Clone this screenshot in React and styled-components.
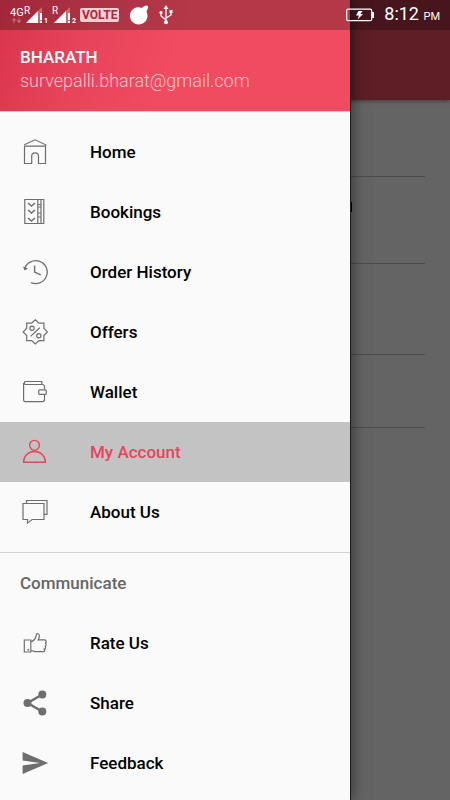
import React from 'react';
import styled, { createGlobalStyle } from 'styled-components';

const GlobalStyle = createGlobalStyle`
  * {
    box-sizing: border-box;
  }
  body {
    margin: 0;
    font-family: Roboto, 'Liberation Sans', sans-serif;
  }
`;

const Screen = styled.div`
  position: relative;
  min-height: 100vh;
  background: #646464;
`;

const StatusBar = styled.header`
  position: absolute;
  top: 0;
  left: 0;
  right: 0;
  z-index: 3;
  display: flex;
  align-items: center;
  justify-content: space-between;
  height: 30px;
  padding: 0 10px;
  color: #fff;
  background: rgba(0, 0, 0, 0.25);
`;

const StatusGroup = styled.div`
  display: flex;
  align-items: center;
  gap: ${(props) => props.$gap}px;
`;

const Volte = styled.span`
  padding: 0 2px;
  border-radius: 2px;
  background: #f5cdd3;
  color: #a52a3d;
  font-size: 12px;
  font-weight: 700;
  line-height: 14px;
`;

const Clock = styled.time`
  font-size: 18px;
  line-height: 32px;
  small {
    font-size: 11px;
  }
`;

const AppBar = styled.div`
  height: 100px;
  background: #5e1e26;
  box-shadow: 0 1px 4px rgba(0, 0, 0, 0.4);
`;

const Fields = styled.div`
  padding: 0 25px;
`;

const Field = styled.div`
  display: flex;
  justify-content: flex-end;
  height: ${(props) => props.$height}px;
  padding: 25px 73px 0 0;
  border-bottom: 1px solid #4c4c4c;
`;

const Caret = styled.span`
  width: 2px;
  height: 10px;
  background: #000;
`;

const Drawer = styled.aside`
  position: absolute;
  top: 0;
  bottom: 0;
  left: 0;
  z-index: 2;
  width: calc(100% - 100px);
  max-width: 400px;
  background: #fafafa;
  box-shadow: 1px 0 0 #1c1c1c, 2px 0 14px rgba(0, 0, 0, 0.5);
`;

const DrawerHeader = styled.div`
  height: 112px;
  padding: 46px 20px 0;
  border-bottom: 1px solid #e3c5c9;
  background: linear-gradient(110deg, #d8344b 0%, #e7435a 25%, #f04b60 50%);
  color: #fff;
`;

const UserName = styled.div`
  font-size: 17px;
  font-weight: 500;
  line-height: 22px;
`;

const UserEmail = styled.div`
  color: #fbc6cd;
  font-size: 18px;
  font-weight: 300;
  line-height: 26px;
`;

const Menu = styled.ul`
  margin: 0;
  padding: ${(props) => (props.$first ? '10px 0' : '0')};
  list-style: none;
`;

const MenuLink = styled.a`
  display: flex;
  align-items: center;
  gap: 40px;
  height: 60px;
  padding: 0 20px;
  background: ${(props) => (props.$active ? '#c3c3c3' : 'transparent')};
  color: ${(props) => (props.$active ? '#e5465c' : '#000')};
  font-size: 17px;
  font-weight: 500;
  text-decoration: none;
  svg {
    color: ${(props) => (props.$active ? '#e5465c' : '#6e6e6e')};
  }
`;

const SectionTitle = styled.h2`
  margin: 0;
  padding: 0 20px;
  border-top: 1px solid #d2d2d2;
  color: #666;
  font-size: 17px;
  font-weight: 500;
  line-height: 60px;
`;

const Icon = ({ children, solid }) => (
  <svg
    width='30'
    height='30'
    viewBox='0 0 30 30'
    fill={solid ? 'currentColor' : 'none'}
    stroke={solid ? 'none' : 'currentColor'}
    strokeWidth='1.2'
    aria-hidden='true'
  >
    {children}
  </svg>
);

const HomeIcon = () => (
  <Icon>
    <path d='M4.5 9.2V26.5h7.2v-7.2a3.4 3.4 0 0 1 6.8 0v7.2h7V9.2M4 9.2h22M4.3 7.8 15 2.8l10.7 5v1.4' />
  </Icon>
);

const BookingsIcon = () => (
  <Icon>
    <path d='M4.8 2.5h19v24h-19zM17.8 2.5v24M21 2.5v24' />
    <path d='m8 6 3.5 3L15 6M8 13l3.5 3 3.5-3M8 21l3.5 3 3.5-3' strokeWidth='1.5' />
    <path d='M18 7.5h3M18 10h3M18 16h3M18 20h3' />
  </Icon>
);

const HistoryIcon = () => (
  <Icon>
    <path d='M4.5 12.5A11.5 11.5 0 1 1 11 25.6' strokeWidth='1.3' />
    <path d='m3 9.5 1.5 4 3.5-2z' fill='currentColor' stroke='none' />
    <path d='M14.6 8.5v6.6l6.2 2.8' strokeWidth='1.4' />
  </Icon>
);

const OffersIcon = () => (
  <Icon>
    <path d='m15.3 2.8 3.6 3.4h5v5l3.5 3.7-3.5 3.7v5h-5l-3.6 3.4-3.6-3.4h-5v-5l-3.5-3.7 3.5-3.7v-5h5z' />
    <circle cx='12' cy='11.3' r='2.1' />
    <circle cx='18.8' cy='18.8' r='2.1' />
    <path d='m19.8 10.8-9.2 8.6' />
  </Icon>
);

const WalletIcon = () => (
  <Icon>
    <path d='M24.5 12V9.5a2 2 0 0 0-2-2H5.2a1.7 1.7 0 0 1 0-3h16.6v3M3.6 6v17a1.6 1.6 0 0 0 1.6 1.6h17.3a2 2 0 0 0 2-2V18' />
    <rect x='18.7' y='12.8' width='7.6' height='4.6' rx='1' />
  </Icon>
);

const AccountIcon = () => (
  <Icon>
    <circle cx='14.5' cy='8.3' r='4.9' strokeWidth='1.4' />
    <path d='M3.6 25.2c0-6.4 4.6-10.7 10.9-10.7s10.9 4.3 10.9 10.7z' strokeWidth='1.4' />
  </Icon>
);

const AboutIcon = () => (
  <Icon>
    <path d='M3 6.5h21v16H12l-4.5 3.6v-3.6H3zM6.5 6.5v-3H27v13.8h-3' />
  </Icon>
);

const RateIcon = () => (
  <Icon>
    <path d='M4.3 12h6.5v12H4.3zM10.8 14c3-1 5-3 5.6-7.3.2-1.7 3.2-1.3 3 1.2-.1 1.6-.6 2.8-1.2 4h6.3c2.3 0 2.3 3 .6 3.3 1.6.5 1.3 2.9-.3 3.1 1.3.5 1 2.6-.5 2.9 1 .7.5 2.5-1 2.5H16c-2.2 0-2.8-1.2-5.2-1.2' />
    <circle cx='8.3' cy='21.7' r='.4' />
  </Icon>
);

const ShareIcon = () => (
  <Icon solid>
    <circle cx='7.5' cy='15' r='4' />
    <circle cx='22.3' cy='6.5' r='4' />
    <circle cx='22.3' cy='23.5' r='4' />
    <path d='M22.3 6.5 7.5 15l14.8 8.5' fill='none' stroke='currentColor' strokeWidth='2.4' />
  </Icon>
);

const SendIcon = () => (
  <Icon solid>
    <path d='M2.6 4 28.2 15 2.6 26v-8.4L20 15 2.6 12.4z' />
  </Icon>
);

const SignalIcon = ({ network, sim }) => (
  <svg width={network ? 40 : 26} height='24' viewBox={network ? '0 0 40 24' : '14 0 26 24'} fill='#fff' aria-hidden='true'>
    {network && (
      <>
        <text x='0' y='13' fontSize='11'>
          {network}
        </text>
        <path d='M4 15l2.5 2.5h-2V20h-1v-2.5h-2zM9 20l-2.5-2.5h2V15h1v2.5h2z' opacity='.35' />
      </>
    )}
    <text x='14' y='11' fontSize='10'>
      R
    </text>
    <path d='M16 20 32 4v16z' opacity='.3' />
    <path d='M16 20 28 8v12z' />
    <path d='M30 10h2v7h-2zM30 18h2v2h-2z' />
    <text x='34' y='20' fontSize='7' fontWeight='700'>
      {sim}
    </text>
  </svg>
);

const CleanerIcon = () => (
  <svg width='20' height='20' viewBox='0 0 20 20' fill='#fff' aria-hidden='true'>
    <path d='M13 3c1.500-2.200 5.300-3.500 6-1.500.5 1.700-.9 3.500-1.500 5.200A8.800 8.800 0 1 1 2.600 5.600 9 9 0 0 1 13 3z' />
  </svg>
);

const UsbIcon = () => (
  <svg width='14' height='20' viewBox='0 0 14 20' fill='#fff' aria-hidden='true'>
    <path d='M7 3v14M2 8v3l5 4M12 7v3l-5 3' fill='none' stroke='#fff' strokeWidth='1.3' />
    <path d='m7 0 2.5 4h-5zM10.5 5h3v3h-3z' />
    <circle cx='2' cy='7.5' r='1.6' />
    <circle cx='7' cy='17.3' r='2' />
  </svg>
);

const BatteryIcon = () => (
  <svg width='28' height='14' viewBox='0 0 28 14' aria-hidden='true'>
    <rect x='.7' y='1.2' width='25' height='11.5' rx='1.5' fill='none' stroke='#fff' strokeWidth='1.2' />
    <path d='M26 4h2v6h-2zM12.500 3h4l-2 3h2.500l-5.500 5.500 1.500-4H10z' fill='#fff' />
  </svg>
);

const mainItems = [
  { label: 'Home', icon: HomeIcon },
  { label: 'Bookings', icon: BookingsIcon },
  { label: 'Order History', icon: HistoryIcon },
  { label: 'Offers', icon: OffersIcon },
  { label: 'Wallet', icon: WalletIcon },
  { label: 'My Account', icon: AccountIcon, active: true },
  { label: 'About Us', icon: AboutIcon },
];

const communicateItems = [
  { label: 'Rate Us', icon: RateIcon },
  { label: 'Share', icon: ShareIcon },
  { label: 'Feedback', icon: SendIcon },
];

const MenuList = ({ items, first }) => (
  <Menu $first={first}>
    {items.map(({ label, icon: ItemIcon, active }) => (
      <li key={label}>
        <MenuLink href='#' $active={active}>
          <ItemIcon />
          {label}
        </MenuLink>
      </li>
    ))}
  </Menu>
);

const App = () => {
  return (
    <Screen>
      <GlobalStyle />
      <StatusBar>
        <StatusGroup $gap={10}>
          <StatusGroup $gap={2}>
            <SignalIcon network='4G' sim='1' />
            <SignalIcon sim='2' />
            <Volte>VOLTE</Volte>
          </StatusGroup>
          <CleanerIcon />
          <UsbIcon />
        </StatusGroup>
        <StatusGroup $gap={10}>
          <BatteryIcon />
          <Clock>
            8:12 <small>PM</small>
          </Clock>
        </StatusGroup>
      </StatusBar>
      <AppBar />
      <Fields>
        <Field $height={77} />
        <Field $height={87}>
          <Caret />
        </Field>
        <Field $height={91} />
        <Field $height={73} />
      </Fields>
      <Drawer>
        <DrawerHeader>
          <UserName>BHARATH</UserName>
          <UserEmail>survepalli.bharat@gmail.com</UserEmail>
        </DrawerHeader>
        <nav>
          <MenuList items={mainItems} first />
          <SectionTitle>Communicate</SectionTitle>
          <MenuList items={communicateItems} />
        </nav>
      </Drawer>
    </Screen>
  );
};

export default App;
